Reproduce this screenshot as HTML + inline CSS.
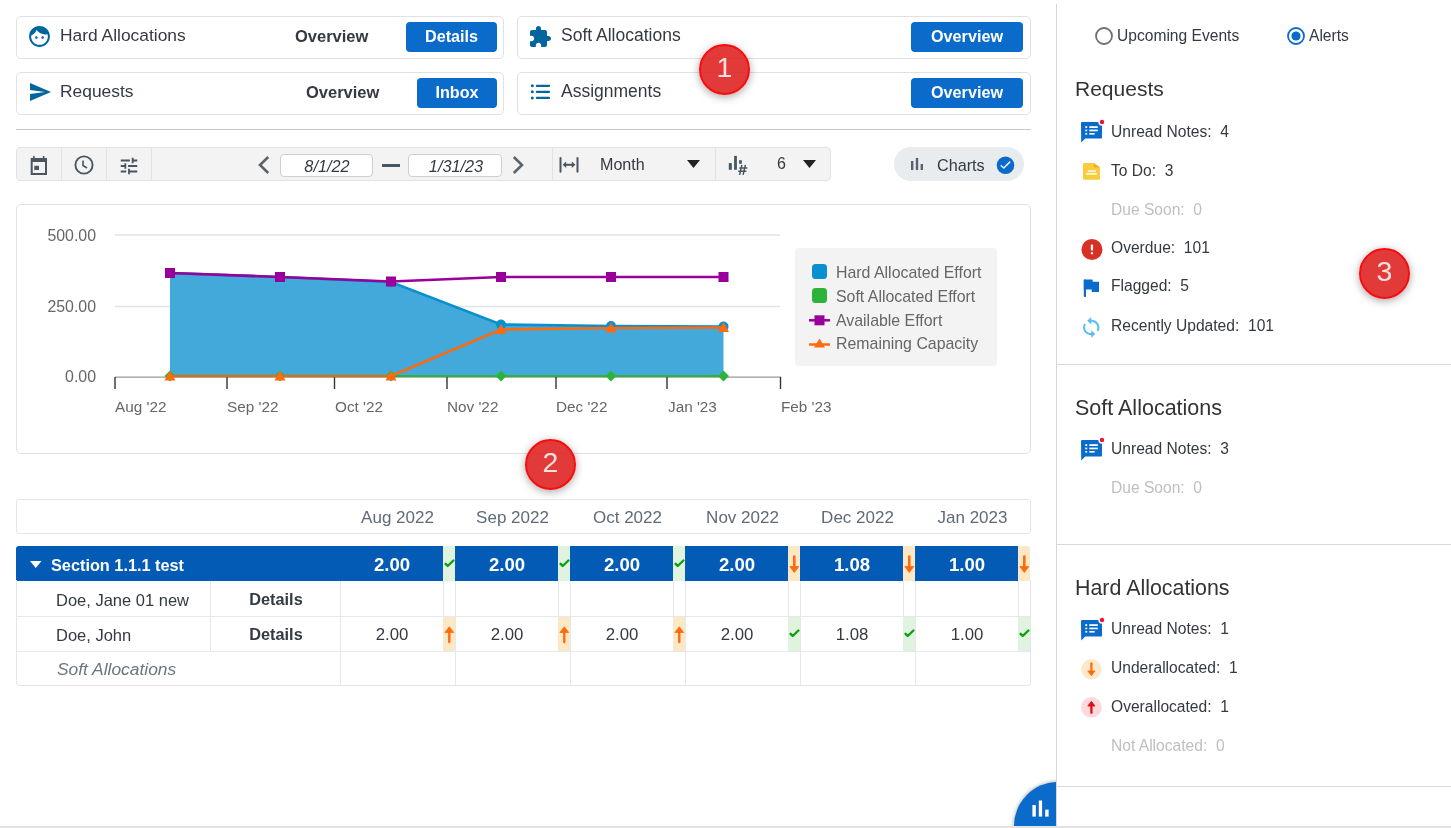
<!DOCTYPE html>
<html><head><meta charset="utf-8">
<style>
*{box-sizing:border-box;margin:0;padding:0}
html,body{width:1451px;height:828px;overflow:hidden;background:#fff;font-family:"Liberation Sans",sans-serif;color:#343a40}
.a{position:absolute}
.t{position:absolute;white-space:pre;line-height:1;will-change:transform}
.card{position:absolute;border:1px solid #dee2e6;border-radius:5px;background:#fff}
.badge{position:absolute;width:51px;height:51px;border-radius:50%;border:2px solid #f70d0d;background:rgba(222,30,30,.88);box-shadow:0 2px 8px rgba(0,0,0,.35);color:rgba(255,235,235,.95);font-size:28.5px;text-align:center;line-height:42px;z-index:10}
</style></head>
<body>

<div class="card" style="left:16px;top:16px;width:488px;height:43px"></div>
<div class="card" style="left:517px;top:16px;width:514px;height:43px"></div>
<div class="card" style="left:16px;top:72px;width:488px;height:43px"></div>
<div class="card" style="left:517px;top:72px;width:514px;height:43px"></div>
<svg class="a" style="left:27px;top:23.5px" width="25" height="25" viewBox="0 0 24 24"><path fill="#02659e" d="M9 11.75c-.69 0-1.25.56-1.25 1.25s.56 1.25 1.25 1.25 1.25-.56 1.25-1.25-.56-1.25-1.25-1.25zm6 0c-.69 0-1.25.56-1.25 1.25s.56 1.25 1.25 1.25 1.25-.56 1.25-1.25-.56-1.25-1.25-1.25zM12 2C6.48 2 2 6.48 2 12s4.48 10 10 10 10-4.48 10-10S17.52 2 12 2zm0 18c-4.41 0-8-3.59-8-8 0-.29.02-.58.05-.86 2.360-1.05 4.23-2.98 5.21-5.37C11.07 8.33 14.05 10 17.42 10c.78 0 1.53-.09 2.25-.26.21.71.33 1.47.33 2.26 0 4.410-3.59 8-8 8z"/></svg>
<div class="t" style="left:59.5px;top:27.3px;font-size:17.4px;font-weight:400;color:#343a40;font-style:normal;">Hard Allocations</div>
<div class="t" style="left:295.0px;top:28.0px;font-size:16.5px;font-weight:700;color:#343a40;font-style:normal;">Overview</div>
<div class="a" style="left:406px;top:22px;width:91px;height:30px;background:#0b6bcb;border-radius:4px"></div>
<div class="t" style="left:406.0px;width:91px;text-align:center;top:28.3px;font-size:16.2px;font-weight:700;color:#fff;font-style:normal">Details</div>
<svg class="a" style="left:528px;top:25px" width="24" height="24" viewBox="0 0 24 24"><path fill="#02659e" d="M20.5 11H19V7c0-1.1-.9-2-2-2h-4V3.5C13 2.12 11.88 1 10.5 1S8 2.12 8 3.5V5H4c-1.1 0-1.99.9-1.99 2v3.8H3.5c1.49 0 2.7 1.21 2.7 2.7s-1.21 2.7-2.7 2.7H2V20c0 1.1.9 2 2 2h3.8v-1.5c0-1.49 1.21-2.7 2.7-2.7 1.49 0 2.7 1.21 2.7 2.7V22H17c1.1 0 2-.9 2-2v-4h1.5c1.38 0 2.5-1.12 2.5-2.5S21.88 11 20.5 11z"/></svg>
<div class="t" style="left:560.5px;top:27.2px;font-size:17.5px;font-weight:400;color:#343a40;font-style:normal;">Soft Allocations</div>
<div class="a" style="left:911px;top:22px;width:112px;height:30px;background:#0b6bcb;border-radius:4px"></div>
<div class="t" style="left:911.0px;width:112px;text-align:center;top:28.3px;font-size:16.2px;font-weight:700;color:#fff;font-style:normal">Overview</div>
<svg class="a" style="left:28px;top:80px" width="24" height="24" viewBox="0 0 24 24"><path fill="#02659e" d="M2.01 21L23 12 2.01 3 2 10l15 2-15 2z"/></svg>
<div class="t" style="left:59.5px;top:83.3px;font-size:17.4px;font-weight:400;color:#343a40;font-style:normal;">Requests</div>
<div class="t" style="left:306.0px;top:84.0px;font-size:16.5px;font-weight:700;color:#343a40;font-style:normal;">Overview</div>
<div class="a" style="left:417px;top:78px;width:80px;height:30px;background:#0b6bcb;border-radius:4px"></div>
<div class="t" style="left:417.0px;width:80px;text-align:center;top:84.3px;font-size:16.2px;font-weight:700;color:#fff;font-style:normal">Inbox</div>
<svg class="a" style="left:530px;top:84px" width="21" height="17" viewBox="0 0 21 17"><g fill="#02659e"><circle cx="2.3" cy="1.8" r="1.5"/><circle cx="2.3" cy="7.8" r="1.5"/><circle cx="2.3" cy="13.9" r="1.5"/></g><g stroke="#02659e" stroke-width="2.3" stroke-linecap="round"><line x1="6.9" y1="1.8" x2="19" y2="1.8"/><line x1="6.9" y1="7.8" x2="19" y2="7.8"/><line x1="6.9" y1="13.9" x2="19" y2="13.9"/></g></svg>
<div class="t" style="left:560.5px;top:83.2px;font-size:17.5px;font-weight:400;color:#343a40;font-style:normal;">Assignments</div>
<div class="a" style="left:911px;top:78px;width:112px;height:30px;background:#0b6bcb;border-radius:4px"></div>
<div class="t" style="left:911.0px;width:112px;text-align:center;top:84.3px;font-size:16.2px;font-weight:700;color:#fff;font-style:normal">Overview</div>
<div class="a" style="left:16px;top:129px;width:1015px;height:1px;background:#c8c8c8"></div>
<div class="a" style="left:16px;top:147px;width:815px;height:34px;background:#f3f3f3;border:1px solid #e2e2e2;border-radius:4px"></div>
<div class="a" style="left:61px;top:148px;width:1px;height:32px;background:#e2e2e2"></div>
<div class="a" style="left:106px;top:148px;width:1px;height:32px;background:#e2e2e2"></div>
<div class="a" style="left:151px;top:148px;width:1px;height:32px;background:#e2e2e2"></div>
<div class="a" style="left:552px;top:148px;width:1px;height:32px;background:#e2e2e2"></div>
<div class="a" style="left:715px;top:148px;width:1px;height:32px;background:#e2e2e2"></div>
<svg class="a" style="left:30px;top:155px" width="18" height="21" viewBox="0 0 18 21"><g fill="#4a5561"><rect x="3.1" y="1" width="1.6" height="3"/><rect x="12.8" y="1" width="1.6" height="3"/><path d="M0.7 3H17V20H0.7z M2.7 7V18H15V7z" fill-rule="evenodd"/><rect x="4.3" y="10.8" width="4.7" height="4.2"/></g></svg>
<svg class="a" style="left:74px;top:155px" width="20" height="20" viewBox="0 0 20 20"><circle cx="10" cy="10" r="8.6" fill="none" stroke="#4a5561" stroke-width="1.9"/><path d="M9 5.5V10.5L13 13" fill="none" stroke="#4a5561" stroke-width="1.6"/></svg>
<svg class="a" style="left:118px;top:154.5px" width="22" height="22" viewBox="0 0 24 24"><path fill="#4a5561" d="M3 17v2h6v-2H3zM3 5v2h10V5H3zm10 16v-2h8v-2h-8v-2h-2v6h2zM7 9v2H3v2h4v2h2V9H7zm14 4v-2H11v2h10zm-6-4h2V7h4V5h-4V3h-2v6z"/></svg>
<svg class="a" style="left:256px;top:155px" width="16" height="20" viewBox="0 0 16 20"><path d="M12.2 2L4 10L12.2 18" fill="none" stroke="#5d6369" stroke-width="2.6"/></svg>
<svg class="a" style="left:510px;top:155px" width="16" height="20" viewBox="0 0 16 20"><path d="M3.8 2L12 10L3.8 18" fill="none" stroke="#5d6369" stroke-width="2.6"/></svg>
<div class="a" style="left:280px;top:154px;width:93px;height:23px;background:#fff;border:1px solid #cfcfcf;border-radius:4px"></div>
<div class="a" style="left:408px;top:154px;width:94px;height:23px;background:#fff;border:1px solid #cfcfcf;border-radius:4px"></div>
<div class="t" style="left:281.0px;width:92px;text-align:center;top:158.2px;font-size:16.3px;font-weight:400;color:#343a40;font-style:italic">8/1/22</div>
<div class="t" style="left:409.5px;width:92px;text-align:center;top:158.2px;font-size:16.3px;font-weight:400;color:#343a40;font-style:italic">1/31/23</div>
<div class="a" style="left:382px;top:164px;width:18px;height:3px;background:#4a5561"></div>
<svg class="a" style="left:559px;top:156px" width="20" height="18" viewBox="0 0 20 18"><g fill="#4a5561"><rect x="0.5" y="1" width="2" height="15.8" rx="1"/><rect x="17.5" y="1" width="2" height="15.8" rx="1"/></g><path d="M5 8.8h10" stroke="#4a5561" stroke-width="2"/><path d="M3.6 8.8l3.6-3.2v6.4z M16.4 8.8l-3.6-3.2v6.4z" fill="#4a5561"/></svg>
<div class="t" style="left:600.0px;top:156.4px;font-size:16.1px;font-weight:400;color:#343a40;font-style:normal;">Month</div>
<svg class="a" style="left:687px;top:160px" width="13" height="8" viewBox="0 0 13 8"><path d="M0 0h13L6.5 8z" fill="#222"/></svg>
<svg class="a" style="left:720px;top:148px" width="32" height="32" viewBox="0 0 32 32"><g fill="#4a5561"><rect x="8.8" y="15.1" width="3" height="6.7"/><rect x="14.1" y="7.9" width="2.8" height="13.9"/><rect x="19.1" y="12.2" width="2.7" height="3.6"/></g><g stroke="#4a5561" stroke-width="1.5"><path d="M19.3 19.9H27.3M18.2 23.2H26.4M21.9 16.8L19.6 26.8M25.4 16.8L23.1 26.8"/></g></svg>
<div class="t" style="left:777.0px;top:156.0px;font-size:16px;font-weight:400;color:#343a40;font-style:normal;">6</div>
<svg class="a" style="left:803px;top:160px" width="13" height="8" viewBox="0 0 13 8"><path d="M0 0h13L6.5 8z" fill="#222"/></svg>
<div class="a" style="left:894px;top:147px;width:130px;height:34px;background:#e9ecef;border-radius:17px"></div>
<svg class="a" style="left:911px;top:158px" width="13" height="12" viewBox="0 0 13 12"><g fill="#5a6169"><rect x="0" y="3" width="2.4" height="9"/><rect x="4.8" y="0" width="2.4" height="12"/><rect x="9.6" y="6" width="2.4" height="6"/></g></svg>
<div class="t" style="left:936.5px;top:156.8px;font-size:16.2px;font-weight:400;color:#343a40;font-style:normal;">Charts</div>
<svg class="a" style="left:996px;top:155.5px" width="19" height="19" viewBox="0 0 19 19"><circle cx="9.5" cy="9.3" r="8.8" fill="#0b6bcb"/><path d="M5.2 9.7L7.8 12L13.7 6.1" fill="none" stroke="#eaf2fb" stroke-width="1.5" stroke-linecap="round" stroke-linejoin="round"/></svg>
<div class="a" style="left:16px;top:204px;width:1015px;height:250px;border:1px solid #dee2e6;border-radius:5px"></div>
<svg class="a" style="left:0;top:0" width="1451" height="828"><g stroke="#e3e3e3" stroke-width="1.5"><line x1="115" y1="235" x2="780" y2="235"/><line x1="115" y1="306.5" x2="780" y2="306.5"/></g><polygon points="170,273 280,277 391,282 501,324.5 611,326 723.5,326.5 723.5,376 170,376" fill="#42a9da"/><polyline points="170,273 280,277 391,282 501,324.5 611,326 723.5,326.5" fill="none" stroke="#0a90d0" stroke-width="2.6"/><circle cx="170" cy="273" r="5" fill="#0a90d0"/><circle cx="280" cy="277" r="5" fill="#0a90d0"/><circle cx="391" cy="282" r="5" fill="#0a90d0"/><circle cx="501" cy="324.5" r="5" fill="#0a90d0"/><circle cx="611" cy="326" r="5" fill="#0a90d0"/><circle cx="723.5" cy="326.5" r="5" fill="#0a90d0"/><path d="M115 377.2H781" stroke="#999" stroke-width="1.3"/><path d="M115 377V389" stroke="#333" stroke-width="1.4"/><path d="M227 377V389" stroke="#333" stroke-width="1.4"/><path d="M334.5 377V389" stroke="#333" stroke-width="1.4"/><path d="M447 377V389" stroke="#333" stroke-width="1.4"/><path d="M556 377V389" stroke="#333" stroke-width="1.4"/><path d="M667 377V389" stroke="#333" stroke-width="1.4"/><path d="M780.5 377V389" stroke="#333" stroke-width="1.4"/><polyline points="170,376 280,376 391,376 501,376 611,376 723.5,376" fill="none" stroke="#2db33a" stroke-width="2.2"/><path d="M170 370.5L175.5 376L170 381.5L164.5 376z" fill="#2db33a"/><path d="M280 370.5L285.5 376L280 381.5L274.5 376z" fill="#2db33a"/><path d="M391 370.5L396.5 376L391 381.5L385.5 376z" fill="#2db33a"/><path d="M501 370.5L506.5 376L501 381.5L495.5 376z" fill="#2db33a"/><path d="M611 370.5L616.5 376L611 381.5L605.5 376z" fill="#2db33a"/><path d="M723.5 370.5L729.0 376L723.5 381.5L718.0 376z" fill="#2db33a"/><polyline points="170,273 280,277 391,281.5 501,277 611,277 723.5,277" fill="none" stroke="#990099" stroke-width="2.6"/><rect x="165" y="268" width="10" height="10" fill="#990099"/><rect x="275" y="272" width="10" height="10" fill="#990099"/><rect x="386" y="276.5" width="10" height="10" fill="#990099"/><rect x="496" y="272" width="10" height="10" fill="#990099"/><rect x="606" y="272" width="10" height="10" fill="#990099"/><rect x="718.5" y="272" width="10" height="10" fill="#990099"/><polyline points="391,376 501,329.5 611,328 723.5,327.5" fill="none" stroke="#fe6a10" stroke-width="2.6"/><path d="M170 376H391" stroke="#c97818" stroke-width="2.4"/><path d="M170 370.5L175.5 380.5L164.5 380.5z" fill="#fe6a10"/><path d="M280 370.5L285.5 380.5L274.5 380.5z" fill="#fe6a10"/><path d="M391 370.5L396.5 380.5L385.5 380.5z" fill="#fe6a10"/><path d="M501 324.0L506.5 334.0L495.5 334.0z" fill="#fe6a10"/><path d="M611 322.5L616.5 332.5L605.5 332.5z" fill="#fe6a10"/><path d="M723.5 322.0L729.0 332.0L718.0 332.0z" fill="#fe6a10"/></svg>
<div class="t" style="left:0;width:96px;text-align:right;top:227.8px;font-size:15.9px;color:#666">500.00</div>
<div class="t" style="left:0;width:96px;text-align:right;top:298.8px;font-size:15.9px;color:#666">250.00</div>
<div class="t" style="left:0;width:96px;text-align:right;top:369.0px;font-size:15.9px;color:#666">0.00</div>
<div class="t" style="left:115.0px;top:398.5px;font-size:15.3px;font-weight:400;color:#666;font-style:normal;">Aug '22</div>
<div class="t" style="left:227.0px;top:398.5px;font-size:15.3px;font-weight:400;color:#666;font-style:normal;">Sep '22</div>
<div class="t" style="left:334.5px;top:398.5px;font-size:15.3px;font-weight:400;color:#666;font-style:normal;">Oct '22</div>
<div class="t" style="left:447.0px;top:398.5px;font-size:15.3px;font-weight:400;color:#666;font-style:normal;">Nov '22</div>
<div class="t" style="left:556.0px;top:398.5px;font-size:15.3px;font-weight:400;color:#666;font-style:normal;">Dec '22</div>
<div class="t" style="left:668.0px;top:398.5px;font-size:15.3px;font-weight:400;color:#666;font-style:normal;">Jan '23</div>
<div class="t" style="left:780.5px;top:398.5px;font-size:15.3px;font-weight:400;color:#666;font-style:normal;">Feb '23</div>
<div class="a" style="left:795px;top:248px;width:202px;height:118px;background:#f3f3f3;border-radius:4px"></div>
<svg class="a" style="left:812px;top:264px" width="16" height="15" viewBox="0 0 16 15"><rect x="0" y="0" width="15" height="15" rx="3.5" fill="#0a90d0"/></svg>
<svg class="a" style="left:812px;top:288px" width="16" height="15" viewBox="0 0 16 15"><rect x="0" y="0" width="15" height="15" rx="3.5" fill="#2db33a"/></svg>
<svg class="a" style="left:809px;top:314px" width="22" height="12" viewBox="0 0 22 12"><path d="M0 6.3H21" stroke="#990099" stroke-width="2.5"/><rect x="5.5" y="1.3" width="10" height="10" fill="#990099"/></svg>
<svg class="a" style="left:809px;top:337px" width="22" height="12" viewBox="0 0 22 12"><path d="M0 7.5H21" stroke="#fe6a10" stroke-width="2.5"/><path d="M10.5 1.5L16 10.5H5z" fill="#fe6a10"/></svg>
<div class="t" style="left:836.0px;top:265.0px;font-size:15.9px;font-weight:400;color:#666;font-style:normal;">Hard Allocated Effort</div>
<div class="t" style="left:836.0px;top:289.0px;font-size:15.9px;font-weight:400;color:#666;font-style:normal;">Soft Allocated Effort</div>
<div class="t" style="left:836.0px;top:313.2px;font-size:15.9px;font-weight:400;color:#666;font-style:normal;">Available Effort</div>
<div class="t" style="left:836.0px;top:336.0px;font-size:15.9px;font-weight:400;color:#666;font-style:normal;">Remaining Capacity</div>
<div class="a" style="left:16px;top:499px;width:1015px;height:35px;border:1px solid #e3e6ea;border-radius:3px"></div>
<div class="t" style="left:339.5px;width:115px;text-align:center;top:508.6px;font-size:17px;font-weight:400;color:#5f6b77;font-style:normal">Aug 2022</div>
<div class="t" style="left:454.5px;width:115px;text-align:center;top:508.6px;font-size:17px;font-weight:400;color:#5f6b77;font-style:normal">Sep 2022</div>
<div class="t" style="left:569.5px;width:115px;text-align:center;top:508.6px;font-size:17px;font-weight:400;color:#5f6b77;font-style:normal">Oct 2022</div>
<div class="t" style="left:684.5px;width:115px;text-align:center;top:508.6px;font-size:17px;font-weight:400;color:#5f6b77;font-style:normal">Nov 2022</div>
<div class="t" style="left:799.5px;width:115px;text-align:center;top:508.6px;font-size:17px;font-weight:400;color:#5f6b77;font-style:normal">Dec 2022</div>
<div class="t" style="left:914.5px;width:115px;text-align:center;top:508.6px;font-size:17px;font-weight:400;color:#5f6b77;font-style:normal">Jan 2023</div>
<div class="a" style="left:16px;top:546px;width:1003px;height:35px;background:#035bb5;border-top-left-radius:3px"></div>
<svg class="a" style="left:30px;top:561px" width="12" height="8" viewBox="0 0 12 8"><path d="M0 0h11.5L5.75 7z" fill="#fff"/></svg>
<div class="t" style="left:51.0px;top:557.4px;font-size:16.3px;font-weight:700;color:#fff;font-style:normal;">Section 1.1.1 test</div>
<div class="t" style="left:341.5px;width:100px;text-align:center;top:555.8px;font-size:18.6px;font-weight:700;color:#fff;font-style:normal">2.00</div>
<div class="a" style="left:443px;top:546px;width:12px;height:35px;background:#dff3df;"></div>
<svg class="a" style="left:443px;top:558.5px" width="12" height="10" viewBox="0 0 12 10"><path d="M2.6 4.8L4.7 7L10.4 1.5" fill="none" stroke="#0fa00f" stroke-width="2.4" stroke-linecap="round" stroke-linejoin="round"/></svg>
<div class="t" style="left:456.5px;width:100px;text-align:center;top:555.8px;font-size:18.6px;font-weight:700;color:#fff;font-style:normal">2.00</div>
<div class="a" style="left:558px;top:546px;width:12px;height:35px;background:#dff3df;"></div>
<svg class="a" style="left:558px;top:558.5px" width="12" height="10" viewBox="0 0 12 10"><path d="M2.6 4.8L4.7 7L10.4 1.5" fill="none" stroke="#0fa00f" stroke-width="2.4" stroke-linecap="round" stroke-linejoin="round"/></svg>
<div class="t" style="left:571.5px;width:100px;text-align:center;top:555.8px;font-size:18.6px;font-weight:700;color:#fff;font-style:normal">2.00</div>
<div class="a" style="left:673px;top:546px;width:12px;height:35px;background:#dff3df;"></div>
<svg class="a" style="left:673px;top:558.5px" width="12" height="10" viewBox="0 0 12 10"><path d="M2.6 4.8L4.7 7L10.4 1.5" fill="none" stroke="#0fa00f" stroke-width="2.4" stroke-linecap="round" stroke-linejoin="round"/></svg>
<div class="t" style="left:686.5px;width:100px;text-align:center;top:555.8px;font-size:18.6px;font-weight:700;color:#fff;font-style:normal">2.00</div>
<div class="a" style="left:788px;top:546px;width:12px;height:35px;background:#fde8c6;"></div>
<svg class="a" style="left:788px;top:554.5px" width="12" height="19" viewBox="0 0 12 19"><path d="M6.3 1.5V12" stroke="#fe6a10" stroke-width="2.6" stroke-linecap="round"/><path d="M1.8 11.5H10.8L6.3 17.5z" fill="#fe6a10" stroke="#fe6a10" stroke-width="0.8" stroke-linejoin="round"/></svg>
<div class="t" style="left:801.5px;width:100px;text-align:center;top:555.8px;font-size:18.6px;font-weight:700;color:#fff;font-style:normal">1.08</div>
<div class="a" style="left:903px;top:546px;width:12px;height:35px;background:#fde8c6;"></div>
<svg class="a" style="left:903px;top:554.5px" width="12" height="19" viewBox="0 0 12 19"><path d="M6.3 1.5V12" stroke="#fe6a10" stroke-width="2.6" stroke-linecap="round"/><path d="M1.8 11.5H10.8L6.3 17.5z" fill="#fe6a10" stroke="#fe6a10" stroke-width="0.8" stroke-linejoin="round"/></svg>
<div class="t" style="left:916.5px;width:100px;text-align:center;top:555.8px;font-size:18.6px;font-weight:700;color:#fff;font-style:normal">1.00</div>
<div class="a" style="left:1018px;top:546px;width:12px;height:35px;background:#fde8c6;border-top-right-radius:3px"></div>
<svg class="a" style="left:1018px;top:554.5px" width="12" height="19" viewBox="0 0 12 19"><path d="M6.3 1.5V12" stroke="#fe6a10" stroke-width="2.6" stroke-linecap="round"/><path d="M1.8 11.5H10.8L6.3 17.5z" fill="#fe6a10" stroke="#fe6a10" stroke-width="0.8" stroke-linejoin="round"/></svg>
<div class="a" style="left:16px;top:580px;width:1015px;height:106px;border:1px solid #e3e6ea;border-top:none;border-radius:0 0 4px 4px"></div>
<div class="a" style="left:17px;top:616px;width:1013px;height:1px;background:#e6e8eb"></div>
<div class="a" style="left:17px;top:651px;width:1013px;height:1px;background:#e6e8eb"></div>
<div class="a" style="left:210px;top:581px;width:1px;height:70px;background:#e6e8eb"></div>
<div class="a" style="left:340px;top:581px;width:1px;height:104px;background:#e6e8eb"></div>
<div class="a" style="left:443px;top:581px;width:1px;height:70px;background:#e6e8eb"></div>
<div class="a" style="left:455px;top:581px;width:1px;height:104px;background:#e6e8eb"></div>
<div class="a" style="left:558px;top:581px;width:1px;height:70px;background:#e6e8eb"></div>
<div class="a" style="left:570px;top:581px;width:1px;height:104px;background:#e6e8eb"></div>
<div class="a" style="left:673px;top:581px;width:1px;height:70px;background:#e6e8eb"></div>
<div class="a" style="left:685px;top:581px;width:1px;height:104px;background:#e6e8eb"></div>
<div class="a" style="left:788px;top:581px;width:1px;height:70px;background:#e6e8eb"></div>
<div class="a" style="left:800px;top:581px;width:1px;height:104px;background:#e6e8eb"></div>
<div class="a" style="left:903px;top:581px;width:1px;height:70px;background:#e6e8eb"></div>
<div class="a" style="left:915px;top:581px;width:1px;height:104px;background:#e6e8eb"></div>
<div class="a" style="left:1018px;top:581px;width:1px;height:70px;background:#e6e8eb"></div>
<div class="t" style="left:56.0px;top:592.0px;font-size:16.5px;font-weight:400;color:#343a40;font-style:normal;">Doe, Jane 01 new</div>
<div class="t" style="left:211.0px;width:130px;text-align:center;top:591.2px;font-size:16.3px;font-weight:700;color:#343a40;font-style:normal">Details</div>
<div class="t" style="left:56.0px;top:627.0px;font-size:16.5px;font-weight:400;color:#343a40;font-style:normal;">Doe, John</div>
<div class="t" style="left:211.0px;width:130px;text-align:center;top:626.2px;font-size:16.3px;font-weight:700;color:#343a40;font-style:normal">Details</div>
<div class="t" style="left:57.0px;top:661.3px;font-size:17.4px;font-weight:400;color:#6c757d;font-style:italic;">Soft Allocations</div>
<div class="t" style="left:341.5px;width:100px;text-align:center;top:626.8px;font-size:16.8px;font-weight:400;color:#343a40;font-style:normal">2.00</div>
<div class="a" style="left:443px;top:617px;width:12px;height:34px;background:#fde8c6;"></div>
<svg class="a" style="left:443px;top:625.0px" width="12" height="19" viewBox="0 0 12 19"><path d="M6.3 7V17" stroke="#fe6a10" stroke-width="2.4" stroke-linecap="round"/><path d="M1.9 7.5H10.7L6.3 1.8z" fill="#fe6a10" stroke="#fe6a10" stroke-width="0.8" stroke-linejoin="round"/></svg>
<div class="t" style="left:456.5px;width:100px;text-align:center;top:626.8px;font-size:16.8px;font-weight:400;color:#343a40;font-style:normal">2.00</div>
<div class="a" style="left:558px;top:617px;width:12px;height:34px;background:#fde8c6;"></div>
<svg class="a" style="left:558px;top:625.0px" width="12" height="19" viewBox="0 0 12 19"><path d="M6.3 7V17" stroke="#fe6a10" stroke-width="2.4" stroke-linecap="round"/><path d="M1.9 7.5H10.7L6.3 1.8z" fill="#fe6a10" stroke="#fe6a10" stroke-width="0.8" stroke-linejoin="round"/></svg>
<div class="t" style="left:571.5px;width:100px;text-align:center;top:626.8px;font-size:16.8px;font-weight:400;color:#343a40;font-style:normal">2.00</div>
<div class="a" style="left:673px;top:617px;width:12px;height:34px;background:#fde8c6;"></div>
<svg class="a" style="left:673px;top:625.0px" width="12" height="19" viewBox="0 0 12 19"><path d="M6.3 7V17" stroke="#fe6a10" stroke-width="2.4" stroke-linecap="round"/><path d="M1.9 7.5H10.7L6.3 1.8z" fill="#fe6a10" stroke="#fe6a10" stroke-width="0.8" stroke-linejoin="round"/></svg>
<div class="t" style="left:686.5px;width:100px;text-align:center;top:626.8px;font-size:16.8px;font-weight:400;color:#343a40;font-style:normal">2.00</div>
<div class="a" style="left:788px;top:617px;width:12px;height:34px;background:#dff3df;"></div>
<svg class="a" style="left:788px;top:629.0px" width="12" height="10" viewBox="0 0 12 10"><path d="M2.6 4.8L4.7 7L10.4 1.5" fill="none" stroke="#0fa00f" stroke-width="2.4" stroke-linecap="round" stroke-linejoin="round"/></svg>
<div class="t" style="left:801.5px;width:100px;text-align:center;top:626.8px;font-size:16.8px;font-weight:400;color:#343a40;font-style:normal">1.08</div>
<div class="a" style="left:903px;top:617px;width:12px;height:34px;background:#dff3df;"></div>
<svg class="a" style="left:903px;top:629.0px" width="12" height="10" viewBox="0 0 12 10"><path d="M2.6 4.8L4.7 7L10.4 1.5" fill="none" stroke="#0fa00f" stroke-width="2.4" stroke-linecap="round" stroke-linejoin="round"/></svg>
<div class="t" style="left:916.5px;width:100px;text-align:center;top:626.8px;font-size:16.8px;font-weight:400;color:#343a40;font-style:normal">1.00</div>
<div class="a" style="left:1018px;top:617px;width:12px;height:34px;background:#dff3df;"></div>
<svg class="a" style="left:1018px;top:629.0px" width="12" height="10" viewBox="0 0 12 10"><path d="M2.6 4.8L4.7 7L10.4 1.5" fill="none" stroke="#0fa00f" stroke-width="2.4" stroke-linecap="round" stroke-linejoin="round"/></svg>
<div class="a" style="left:1056px;top:4px;width:1px;height:824px;background:#d6d6d6"></div>
<div class="a" style="left:1057px;top:364px;width:394px;height:1px;background:#d9d9d9"></div>
<div class="a" style="left:1057px;top:544px;width:394px;height:1px;background:#d9d9d9"></div>
<div class="a" style="left:1057px;top:786px;width:394px;height:1px;background:#d9d9d9"></div>
<svg class="a" style="left:1095px;top:27px" width="18" height="18" viewBox="0 0 18 18"><circle cx="9" cy="9" r="8" fill="#fff" stroke="#6b7075" stroke-width="1.8"/></svg>
<div class="t" style="left:1116.5px;top:27.8px;font-size:15.6px;font-weight:400;color:#343a40;font-style:normal;">Upcoming Events</div>
<svg class="a" style="left:1287px;top:27px" width="18" height="18" viewBox="0 0 18 18"><circle cx="9" cy="9" r="8" fill="#fff" stroke="#0b6bcb" stroke-width="1.8"/><circle cx="9" cy="9" r="4.6" fill="#0b6bcb"/></svg>
<div class="t" style="left:1308.5px;top:27.8px;font-size:15.6px;font-weight:400;color:#343a40;font-style:normal;">Alerts</div>
<div class="t" style="left:1075.0px;top:78.0px;font-size:21px;font-weight:400;color:#333;font-style:normal;">Requests</div>
<svg class="a" style="left:1080px;top:118px" width="27" height="27" viewBox="0 0 27 27"><path d="M1 5.2Q1 4 2.2 4H20.8Q22 4 22 5.2V19.4Q22 20.6 20.8 20.6H5.2L1.2 24.4z" fill="#0b6bcb"/><circle cx="22" cy="4" r="3.7" fill="#fff"/><circle cx="22" cy="4" r="2.2" fill="#f0113a"/><g fill="#fff"><rect x="5.3" y="8.2" width="1.9" height="1.8"/><rect x="5.3" y="11.6" width="1.9" height="1.7"/><rect x="5.3" y="15" width="1.9" height="1.6"/><rect x="9.3" y="8.2" width="8.5" height="1.8"/><rect x="9.3" y="11.6" width="8.5" height="1.7"/><rect x="9.3" y="15" width="5.4" height="1.6"/></g></svg>
<div class="t" style="left:1111.0px;top:124.1px;font-size:15.6px;font-weight:400;color:#343a40;font-style:normal;">Unread Notes:  4</div>
<svg class="a" style="left:1083px;top:163px" width="17" height="17" viewBox="0 0 17 17"><path d="M1.5 0H10.8L17 4.6V15.3Q17 16.8 15.5 16.8H1.5Q0 16.8 0 15.3V1.5Q0 0 1.5 0z" fill="#f8cd3c"/><path d="M10.8 0V4.6H17z" fill="#f6ab2a"/><g fill="#fff" opacity="0.9"><rect x="4.8" y="7.3" width="8.1" height="1.5"/><rect x="2.9" y="10" width="11" height="1.7"/></g></svg>
<div class="t" style="left:1111.0px;top:163.1px;font-size:15.6px;font-weight:400;color:#343a40;font-style:normal;">To Do:  3</div>
<div class="t" style="left:1111.0px;top:201.7px;font-size:15.6px;font-weight:400;color:#bfbfbf;font-style:normal;">Due Soon:  0</div>
<svg class="a" style="left:1080.5px;top:239px" width="22" height="22" viewBox="0 0 22 22"><circle cx="10.95" cy="10.5" r="10.5" fill="#d93025"/><rect x="9.85" y="5.5" width="2.2" height="6" rx="0.6" fill="#fff"/><rect x="9.85" y="13.2" width="2.2" height="2" fill="#fff"/></svg>
<div class="t" style="left:1111.0px;top:239.8px;font-size:15.6px;font-weight:400;color:#343a40;font-style:normal;">Overdue:  101</div>
<svg class="a" style="left:1083px;top:279px" width="18" height="19" viewBox="0 0 18 19"><rect x="0.8" y="0.6" width="2.2" height="17.4" rx="0.8" fill="#0b6bcb"/><path d="M0.8 0.6H9.5L9.8 2.7H16V12.9H8.8L8.6 10.6H0.8z" fill="#0b6bcb"/></svg>
<div class="t" style="left:1111.0px;top:278.4px;font-size:15.6px;font-weight:400;color:#343a40;font-style:normal;">Flagged:  5</div>
<svg class="a" style="left:1079.4px;top:315.6px" width="24" height="23" viewBox="0 0 24 23"><path fill="#5bbcf5" transform="scale(1.02 0.95)" d="M12 4V1L8 5l4 4V6c3.31 0 6 2.69 6 6 0 1.01-.25 1.97-.7 2.8l1.460 1.46C19.54 15.03 20 13.57 20 12c0-4.42-3.58-8-8-8zm0 14c-3.31 0-6-2.69-6-6 0-1.01.25-1.97.7-2.8L5.24 7.74C4.46 8.97 4 10.43 4 12c0 4.42 3.58 8 8 8v3l4-4-4-4v3z"/></svg>
<div class="t" style="left:1111.0px;top:317.5px;font-size:15.6px;font-weight:400;color:#343a40;font-style:normal;">Recently Updated:  101</div>
<div class="t" style="left:1075.0px;top:398.3px;font-size:21.5px;font-weight:400;color:#333;font-style:normal;">Soft Allocations</div>
<svg class="a" style="left:1080px;top:436px" width="27" height="27" viewBox="0 0 27 27"><path d="M1 5.2Q1 4 2.2 4H20.8Q22 4 22 5.2V19.4Q22 20.6 20.8 20.6H5.2L1.2 24.4z" fill="#0b6bcb"/><circle cx="22" cy="4" r="3.7" fill="#fff"/><circle cx="22" cy="4" r="2.2" fill="#f0113a"/><g fill="#fff"><rect x="5.3" y="8.2" width="1.9" height="1.8"/><rect x="5.3" y="11.6" width="1.9" height="1.7"/><rect x="5.3" y="15" width="1.9" height="1.6"/><rect x="9.3" y="8.2" width="8.5" height="1.8"/><rect x="9.3" y="11.6" width="8.5" height="1.7"/><rect x="9.3" y="15" width="5.4" height="1.6"/></g></svg>
<div class="t" style="left:1111.0px;top:441.1px;font-size:15.6px;font-weight:400;color:#343a40;font-style:normal;">Unread Notes:  3</div>
<div class="t" style="left:1111.0px;top:479.9px;font-size:15.6px;font-weight:400;color:#bfbfbf;font-style:normal;">Due Soon:  0</div>
<div class="t" style="left:1075.0px;top:578.2px;font-size:21.4px;font-weight:400;color:#333;font-style:normal;">Hard Allocations</div>
<svg class="a" style="left:1080px;top:616px" width="27" height="27" viewBox="0 0 27 27"><path d="M1 5.2Q1 4 2.2 4H20.8Q22 4 22 5.2V19.4Q22 20.6 20.8 20.6H5.2L1.2 24.4z" fill="#0b6bcb"/><circle cx="22" cy="4" r="3.7" fill="#fff"/><circle cx="22" cy="4" r="2.2" fill="#f0113a"/><g fill="#fff"><rect x="5.3" y="8.2" width="1.9" height="1.8"/><rect x="5.3" y="11.6" width="1.9" height="1.7"/><rect x="5.3" y="15" width="1.9" height="1.6"/><rect x="9.3" y="8.2" width="8.5" height="1.8"/><rect x="9.3" y="11.6" width="8.5" height="1.7"/><rect x="9.3" y="15" width="5.4" height="1.6"/></g></svg>
<div class="t" style="left:1111.0px;top:621.1px;font-size:15.6px;font-weight:400;color:#343a40;font-style:normal;">Unread Notes:  1</div>
<svg class="a" style="left:1081px;top:659px" width="22" height="22" viewBox="0 0 22 22"><circle cx="10.4" cy="10.2" r="10.2" fill="#fde9c9"/><path d="M10.4 4.3V12.5" stroke="#fe6a10" stroke-width="2.2" stroke-linecap="round"/><path d="M6.8 12H14L10.4 16.6z" fill="#fe6a10" stroke="#fe6a10" stroke-width="0.9" stroke-linejoin="round"/></svg>
<div class="t" style="left:1111.0px;top:660.1px;font-size:15.6px;font-weight:400;color:#343a40;font-style:normal;">Underallocated:  1</div>
<svg class="a" style="left:1081px;top:697px" width="22" height="22" viewBox="0 0 22 22"><circle cx="10.4" cy="10.4" r="10.4" fill="#fdd9dc"/><path d="M10.4 8.5V15.8" stroke="#e01010" stroke-width="2.3" stroke-linecap="round"/><path d="M6.8 9H14L10.4 4.4z" fill="#e01010" stroke="#e01010" stroke-width="0.9" stroke-linejoin="round"/></svg>
<div class="t" style="left:1111.0px;top:699.1px;font-size:15.6px;font-weight:400;color:#343a40;font-style:normal;">Overallocated:  1</div>
<div class="t" style="left:1111.0px;top:737.9px;font-size:15.6px;font-weight:400;color:#bfbfbf;font-style:normal;">Not Allocated:  0</div>
<div class="a" style="left:0;top:0;width:1056px;height:826px;overflow:hidden"><div class="a" style="left:1014px;top:782px;width:88px;height:88px;border-radius:50%;background:#0b6bcb;box-shadow:0 0 4px rgba(0,0,0,.4)"></div></div>
<svg class="a" style="left:1032px;top:800px" width="18" height="18" viewBox="0 0 18 18"><g fill="#fff"><rect x="0.4" y="5" width="3.4" height="11.6"/><rect x="6.8" y="0.5" width="3.3" height="16.1"/><rect x="13.2" y="9.6" width="3.4" height="7"/></g></svg>
<div class="a" style="left:0px;top:826px;width:1451px;height:2px;background:#e2e2e2"></div>
<div class="badge" style="left:699px;top:44px">1</div>
<div class="badge" style="left:525px;top:439px">2</div>
<div class="badge" style="left:1359px;top:248px">3</div>
</body></html>
